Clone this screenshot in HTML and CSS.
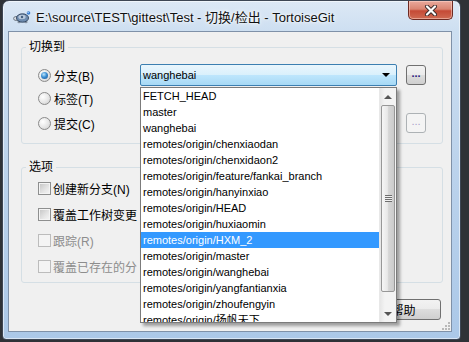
FILE: index.html
```html
<!DOCTYPE html>
<html lang="zh-CN">
<head>
    <meta charset="UTF-8">
    <meta name="viewport" content="width=device-width, initial-scale=1.0">
    <title>切换/检出 - TortoiseGit</title>
    <link rel="stylesheet" href="styles.css">
</head>
<body>
    <div class="window">
        <div class="titlebar">
            <svg class="app-icon" width="18" height="14" viewBox="0 0 18 14">
                <ellipse cx="3" cy="8.5" rx="2.4" ry="2" fill="#d9dee4" stroke="#5a6470" stroke-width="0.8"/>
                <ellipse cx="6" cy="12" rx="1.6" ry="1.2" fill="#8895a3"/>
                <ellipse cx="13" cy="12" rx="1.6" ry="1.2" fill="#8895a3"/>
                <ellipse cx="9.5" cy="8" rx="6" ry="4.2" fill="#6f8db0" stroke="#2d3f58" stroke-width="0.9"/>
                <ellipse cx="9" cy="7" rx="3.6" ry="2.2" fill="#b9c9db"/>
                <circle cx="9" cy="7" r="1.2" fill="#45607f"/>
                <circle cx="15.5" cy="3" r="1.8" fill="#3a7fd0"/>
                <circle cx="15.1" cy="2.6" r="0.7" fill="#cfe6ff"/>
            </svg>
            <span class="title">E:\source\TEST\gittest\Test - 切换/检出 - TortoiseGit</span>
            <div class="close-btn">
                <svg width="14" height="11" viewBox="0 0 14 11">
                    <path d="M3 1.5 L11 9.5 M11 1.5 L3 9.5" stroke="#3b2a2a" stroke-width="4" stroke-linecap="round"/>
                    <path d="M3 1.5 L11 9.5 M11 1.5 L3 9.5" stroke="#ffffff" stroke-width="2.2" stroke-linecap="round"/>
                </svg>
            </div>
        </div>

        <div class="client">
            <fieldset class="group">
                <legend>切换到</legend>
                <div class="switch-grid">
                    <label class="option"><span class="radio checked"></span>分支(B)</label>
                    <div class="combo focused">
                        <span>wanghebai</span>
                        <span class="arrow"></span>
                    </div>
                    <button class="dots">...</button>

                    <label class="option"><span class="radio"></span>标签(T)</label>
                    <div class="combo disabled"></div>
                    <span></span>

                    <label class="option"><span class="radio"></span>提交(C)</label>
                    <div class="combo disabled"></div>
                    <button class="dots" disabled>...</button>
                </div>
            </fieldset>

            <fieldset class="group options">
                <legend>选项</legend>
                <div class="check-list">
                    <label class="option"><span class="check"></span>创建新分支(N)</label>
                    <label class="option"><span class="check"></span>覆盖工作树变更</label>
                    <label class="option disabled"><span class="check"></span>跟踪(R)</label>
                    <label class="option disabled"><span class="check"></span>覆盖已存在的分</label>
                </div>
            </fieldset>

            <div class="buttons">
                <button class="btn">帮助</button>
            </div>

            <div class="grip">
                <svg width="8" height="8" viewBox="0 0 8 8" fill="#b8b8b8">
                    <rect x="6" y="0" width="2" height="2"/>
                    <rect x="3" y="3" width="2" height="2"/><rect x="6" y="3" width="2" height="2"/>
                    <rect x="0" y="6" width="2" height="2"/><rect x="3" y="6" width="2" height="2"/><rect x="6" y="6" width="2" height="2"/>
                </svg>
            </div>

            <div class="dropdown">
                <ul class="items">
                    <li>FETCH_HEAD</li>
                    <li>master</li>
                    <li>wanghebai</li>
                    <li>remotes/origin/chenxiaodan</li>
                    <li>remotes/origin/chenxidaon2</li>
                    <li>remotes/origin/feature/fankai_branch</li>
                    <li>remotes/origin/hanyinxiao</li>
                    <li>remotes/origin/HEAD</li>
                    <li>remotes/origin/huxiaomin</li>
                    <li class="selected">remotes/origin/HXM_2</li>
                    <li>remotes/origin/master</li>
                    <li>remotes/origin/wanghebai</li>
                    <li>remotes/origin/yangfantianxia</li>
                    <li>remotes/origin/zhoufengyin</li>
                    <li>remotes/origin/扬帆天下</li>
                </ul>
                <div class="scrollbar">
                    <div class="sb-btn"><span class="up"></span></div>
                    <div class="sb-track">
                        <div class="thumb"><span class="thumb-grip"></span></div>
                    </div>
                    <div class="sb-btn"><span class="down"></span></div>
                </div>
            </div>
        </div>
    </div>
</body>
</html>
```

FILE: styles.css
```css
body {
    margin: 0;
    padding: 0;
    background-color: #2f3237;
    font-family: "Liberation Sans", "Noto Sans CJK SC", sans-serif;
    font-size: 12px;
    color: #000;
}

/* window frame */
.window {
    margin-left: 2px;
    width: 459px;
    height: 340px;
    box-sizing: border-box;
    border: 1px solid #3d4654;
    border-radius: 7px 7px 4px 4px;
    background: linear-gradient(to bottom, #dce8f5 0, #cddff1 30px, #bcd3ec 160px, #abc8e8 100%);
    box-shadow: inset 0 0 0 1px rgba(255, 255, 255, 0.55);
    padding: 0 8px 7px 5px;
}

.titlebar {
    height: 30px;
    display: flex;
    align-items: center;
}

.app-icon {
    margin-left: 5px;
    margin-right: 5px;
    margin-top: 1px;
}

.title {
    flex-grow: 1;
    font-size: 13px;
    color: #111;
    text-shadow: 0 0 6px #fff, 0 0 3px #fff;
    white-space: nowrap;
}

.close-btn {
    align-self: flex-start;
    width: 45px;
    height: 19px;
    box-sizing: border-box;
    margin-right: -1px;
    border: 1px solid #6d2a22;
    border-top: none;
    border-radius: 0 0 5px 5px;
    background: linear-gradient(to bottom, #e9a99c 0, #d98572 45%, #c54a36 55%, #cf6a52 100%);
    box-shadow: inset 0 0 0 1px rgba(255, 220, 210, 0.5);
    display: flex;
    justify-content: center;
    align-items: center;
}

/* client area */
.client {
    position: relative;
    width: 444px;
    height: 301px;
    box-sizing: border-box;
    border: 1px solid #7f91a8;
    background: #f0f0f0;
    padding: 0 8px 0 12px;
}

.group {
    margin: 7px 0 0 0;
    padding: 0;
    border: 1px solid #d5dfe5;
    border-radius: 3px;
    min-inline-size: 0;
}

.group legend {
    margin-left: 4px;
    padding: 0 3px;
    line-height: 16px;
    font-size: 12px;
}

.group.options {
    margin-top: 15px;
}

.switch-grid {
    display: grid;
    grid-template-columns: 102px 257px 29px;
    grid-template-rows: 22px 24px 26px;
    align-items: center;
    padding: 9px 0 7px 16px;
}

.switch-grid .dots {
    justify-self: end;
}

.option {
    display: flex;
    align-items: center;
    height: 100%;
    white-space: nowrap;
    font-size: 12px;
}

.option.disabled {
    color: #8d8d8d;
}

.radio {
    position: relative;
    width: 13px;
    height: 13px;
    box-sizing: border-box;
    margin-right: 3px;
    border-radius: 50%;
    border: 1px solid #8a8a8a;
    background: radial-gradient(circle at 35% 35%, #ffffff 0, #e6e6e6 55%, #c9c9c9 100%);
}

.radio.checked::after {
    content: "";
    position: absolute;
    left: 2px;
    top: 2px;
    width: 7px;
    height: 7px;
    border-radius: 50%;
    background: radial-gradient(circle at 40% 35%, #bfe6fb 0, #3b8fd4 45%, #1b4f8c 100%);
}

.check {
    width: 13px;
    height: 13px;
    box-sizing: border-box;
    margin-right: 2px;
    border: 1px solid #8e8f8f;
    background: linear-gradient(135deg, #c3c3c3 0, #e6e6e6 60%, #f6f6f6 100%);
    box-shadow: inset 0 0 0 1px #f4f4f4;
}

.option.disabled .check {
    border-color: #bcbcbc;
    background: #f4f4f4;
    box-shadow: none;
}

.check-list {
    padding: 0 0 3px 16px;
}

.check-list .option {
    height: 26px;
}

/* combobox */
.combo {
    height: 22px;
    box-sizing: border-box;
    border: 1px solid #3c7fb1;
    border-radius: 2px;
    display: flex;
    align-items: center;
    justify-content: space-between;
    padding: 0 6px 0 2px;
    font-size: 11px;
}

.combo.focused {
    background: linear-gradient(to bottom, #eaf6fd 0, #d9f0fc 50%, #bee6fd 50%, #a7d9f5 100%);
}

.combo.disabled {
    border-color: #adb2b5;
    background: #f4f4f4;
}

.combo .arrow {
    width: 0;
    height: 0;
    border-left: 4px solid transparent;
    border-right: 4px solid transparent;
    border-top: 4px solid #000;
}

.dots {
    width: 20px;
    height: 20px;
    padding: 0 0 3px 0;
    border: 1px solid #707070;
    border-radius: 3px;
    background: linear-gradient(to bottom, #f2f2f2 0, #ebebeb 50%, #dddddd 50%, #cfcfcf 100%);
    font-family: "Liberation Sans", sans-serif;
    font-size: 11px;
    font-weight: bold;
    color: #2a2080;
    line-height: 1;
}

.dots:disabled {
    border-color: #adb2b5;
    background: #f4f4f4;
    color: #a8a0c8;
    font-weight: normal;
}

/* bottom buttons */
.buttons {
    display: flex;
    justify-content: flex-end;
    gap: 6px;
    margin-top: 16px;
    padding-right: 2px;
}

.btn {
    width: 75px;
    height: 21px;
    padding: 0;
    border: 1px solid #707070;
    border-radius: 3px;
    background: linear-gradient(to bottom, #f2f2f2 0, #ebebeb 50%, #dddddd 50%, #cfcfcf 100%);
    font-family: "Noto Sans CJK SC", sans-serif;
    font-size: 12px;
    color: #000;
}

.grip {
    position: absolute;
    right: 1px;
    bottom: 1px;
    line-height: 0;
}

/* dropdown list over the dialog */
.dropdown {
    position: absolute;
    left: 131px;
    top: 55px;
    width: 257px;
    height: 236px;
    box-sizing: border-box;
    border: 1px solid #7b7b7b;
    background: #ffffff;
    box-shadow: 3px 3px 3px rgba(0, 0, 0, 0.35);
    display: flex;
}

.items {
    flex-grow: 1;
    list-style: none;
    margin: 0;
    padding: 0;
    overflow: hidden;
}

.items li {
    height: 16px;
    line-height: 16px;
    padding-left: 2px;
    font-size: 11px;
    white-space: nowrap;
}

.items li.selected {
    background: #3399ff;
    color: #fff;
}

.scrollbar {
    width: 17px;
    display: flex;
    flex-direction: column;
    background: linear-gradient(to right, #e6e6e6 0, #f3f3f3 30%, #f3f3f3 100%);
    border-left: 1px solid #e8e8e8;
    box-sizing: border-box;
}

.sb-btn {
    height: 17px;
    display: flex;
    justify-content: center;
    align-items: center;
}

.sb-btn .up,
.sb-btn .down {
    width: 0;
    height: 0;
    border-left: 4px solid transparent;
    border-right: 4px solid transparent;
}

.sb-btn .up {
    border-bottom: 4px solid #555;
}

.sb-btn .down {
    border-top: 4px solid #555;
}

.sb-track {
    flex-grow: 1;
    padding: 0 1px;
}

.thumb {
    height: 187px;
    box-sizing: border-box;
    border: 1px solid #979797;
    border-radius: 2px;
    background: linear-gradient(to right, #f6f6f6 0, #e8e8e8 45%, #d6d6d6 55%, #cbcbcb 100%);
    display: flex;
    justify-content: center;
    align-items: center;
}

.thumb-grip {
    width: 7px;
    height: 7px;
    background: repeating-linear-gradient(to bottom, #6e6e6e 0, #6e6e6e 1px, #f0f0f0 1px, #f0f0f0 2px);
}
```
